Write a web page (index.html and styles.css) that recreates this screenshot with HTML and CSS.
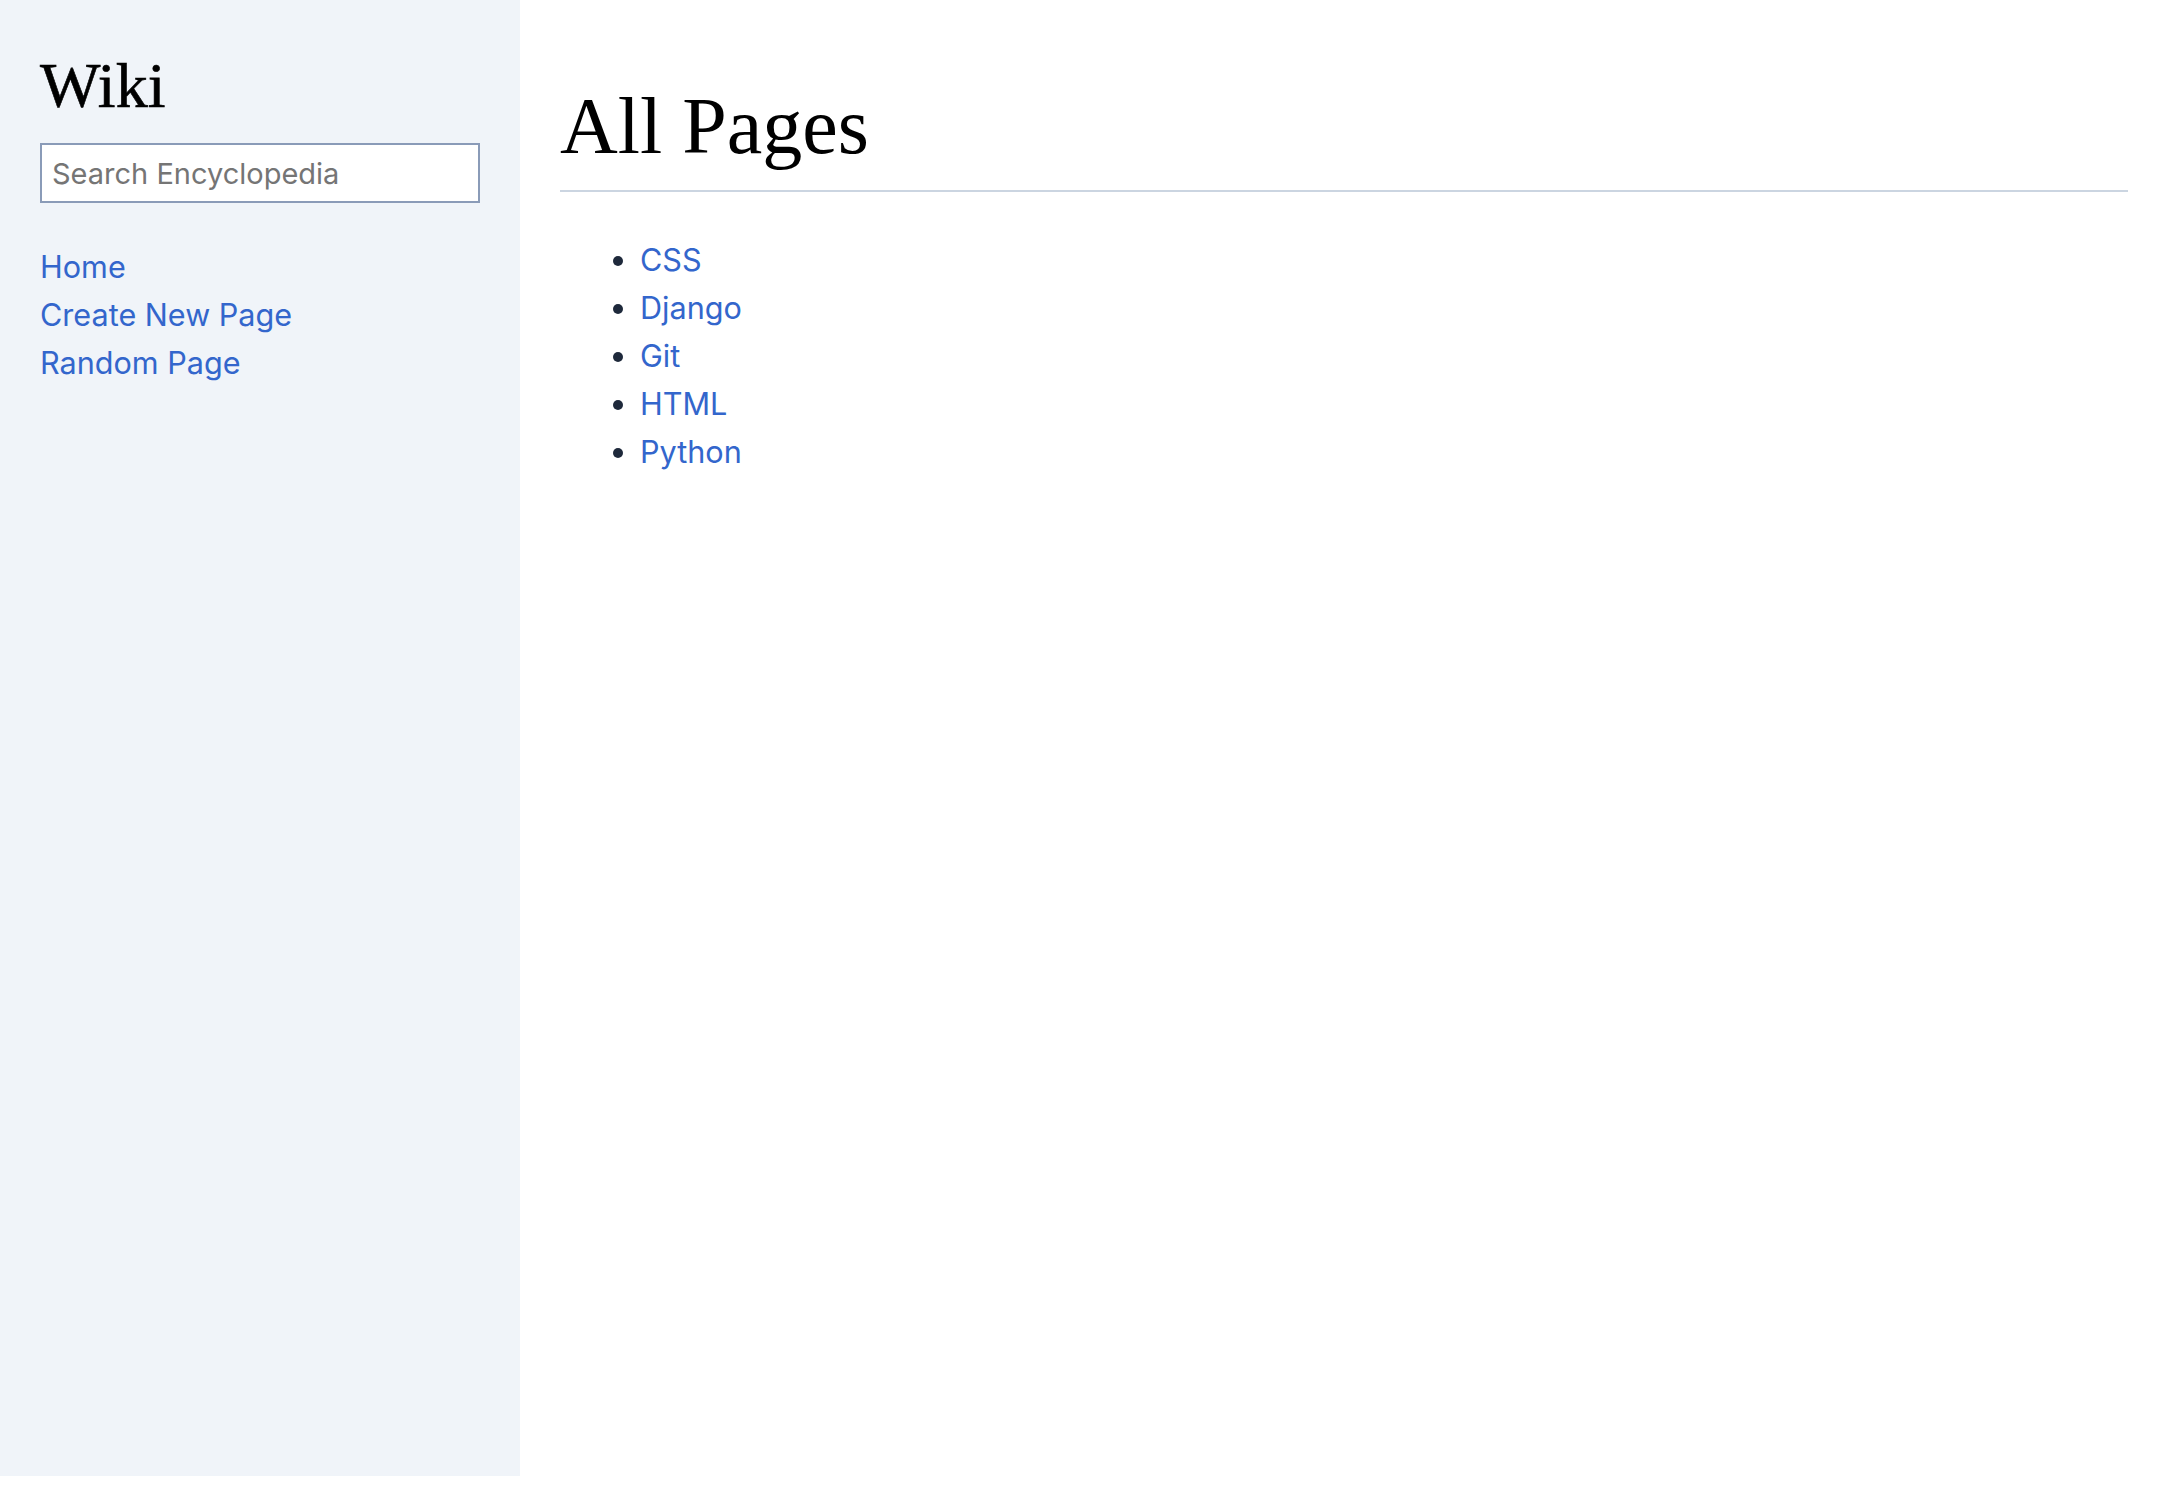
FILE: index.html
```html
<!DOCTYPE html>
<html lang="en">
<head>
<meta charset="utf-8">
<title>Encyclopedia</title>
<link rel="stylesheet" href="styles.css">
</head>
<body>
<div class="layout">
  <aside class="sidebar">
    <h2 class="brand">Wiki</h2>
    <form class="search">
      <input class="search-input" type="text" name="q" placeholder="Search Encyclopedia">
    </form>
    <nav class="nav">
      <a href="#">Home</a>
      <a href="#">Create New Page</a>
      <a href="#">Random Page</a>
    </nav>
  </aside>
  <main class="main">
    <h1 class="title">All Pages</h1>
    <hr class="rule">
    <ul class="pages">
      <li><a href="#">CSS</a></li>
      <li><a href="#">Django</a></li>
      <li><a href="#">Git</a></li>
      <li><a href="#">HTML</a></li>
      <li><a href="#">Python</a></li>
    </ul>
  </main>
</div>
</body>
</html>
```

FILE: styles.css
```css
html, body {
  margin: 0;
  padding: 0;
  background: #ffffff;
}

body {
  font-family: Inter, "Noto Sans", "Liberation Sans", sans-serif;
  font-size: 30.6px;
  line-height: 48px;
  color: #1e293b;
}

a {
  color: #3366cc;
  text-decoration: none;
}

.layout {
  display: flex;
  height: 1476px;
}

.sidebar {
  width: 520px;
  flex: none;
  box-sizing: border-box;
  background: #f0f4f9;
  padding: 48px 40px 0 40px;
}

.brand {
  font-family: "Liberation Serif", serif;
  font-weight: normal;
  font-size: 64px;
  line-height: 76px;
  margin: 0;
  color: #000;
  -webkit-text-stroke: 0.6px #000;
}

.search {
  margin-top: 19px;
}

.search-input {
  box-sizing: border-box;
  display: block;
  width: 100%;
  height: 60px;
  margin: 0;
  padding: 0 10px;
  border: 2px solid #8a9bb8;
  border-radius: 0;
  background: #fff;
  font-family: inherit;
  font-size: 29px;
  color: #1e293b;
  outline: none;
}

.search-input::placeholder {
  color: #757575;
}

.nav {
  display: flex;
  flex-direction: column;
  margin-top: 40px;
}

.main {
  flex: 1;
  min-width: 0;
  padding: 78px 40px 0 40px;
}

.title {
  font-family: "Liberation Serif", serif;
  font-weight: normal;
  font-size: 80px;
  line-height: 96px;
  margin: 0 0 16px;
  color: #000;
}

.rule {
  border: 0;
  border-top: 2px solid #cbd5e1;
  margin: 0;
}

.pages {
  margin: 44px 0 0;
  padding-left: 80px;
}

.pages li::marker {
  color: #1e293b;
}
```
